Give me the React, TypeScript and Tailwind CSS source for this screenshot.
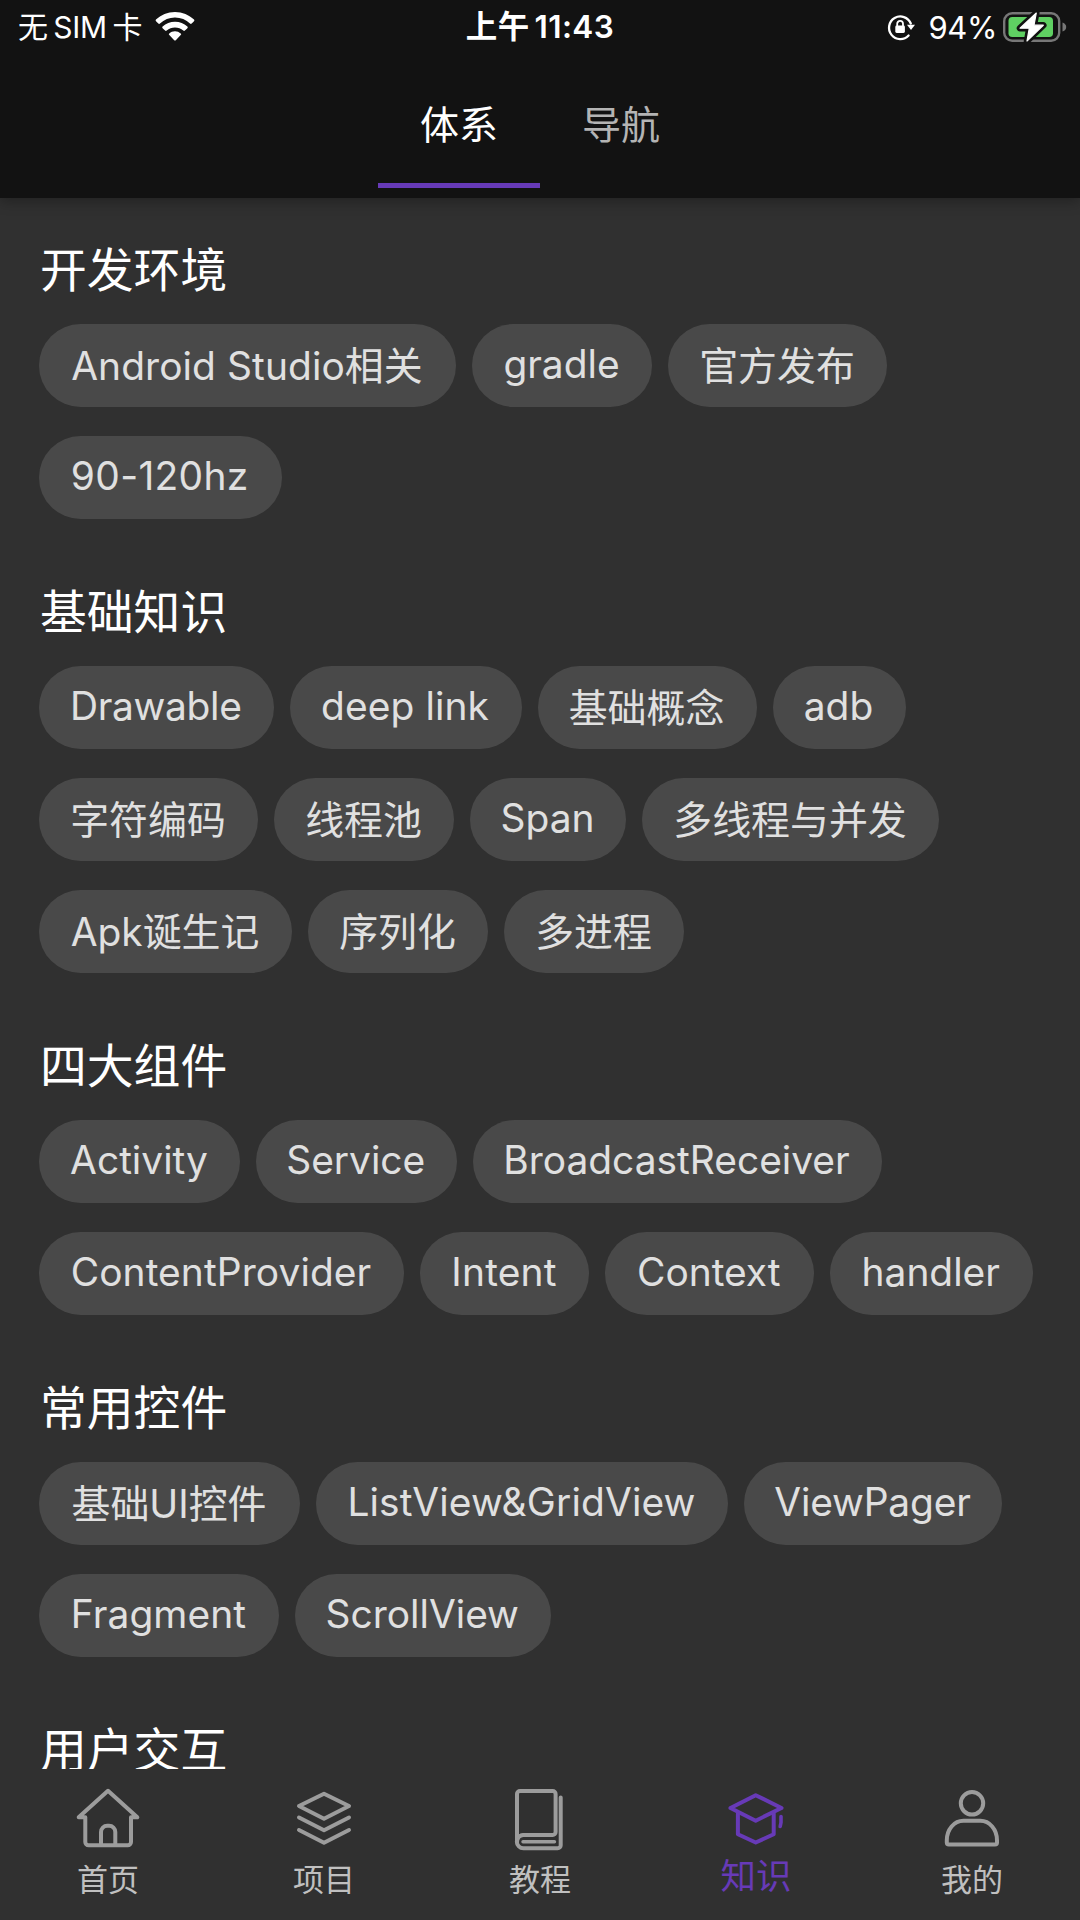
import React from "react";

type Chip = [label: string, classes: string];

const SECTIONS: { title: string; chips: Chip[] }[] = [
  {
    title: "开发环境",
    chips: [
      ["Android Studio相关", "w-[417px] tracking-[0.1px]"],
      ["gradle", "w-[180px]"],
      ["官方发布", "w-[219px]"],
      ["90-120hz", "w-[242.500px] tracking-[0.35px]"],
    ],
  },
  {
    title: "基础知识",
    chips: [
      ["Drawable", "w-[234.500px] tracking-[-0.3px]"],
      ["deep link", "w-[232px] tracking-[0.1px]"],
      ["基础概念", "w-[219px]"],
      ["adb", "w-[133px]"],
      ["字符编码", "w-[219px]"],
      ["线程池", "w-[180px]"],
      ["Span", "w-[156px]"],
      ["多线程与并发", "w-[297px]"],
      ["Apk诞生记", "w-[253px]"],
      ["序列化", "w-[180px]"],
      ["多进程", "w-[180px]"],
    ],
  },
  {
    title: "四大组件",
    chips: [
      ["Activity", "w-[201px]"],
      ["Service", "w-[200.500px]"],
      ["BroadcastReceiver", "w-[409px]"],
      ["ContentProvider", "w-[365px] tracking-[0.1px]"],
      ["Intent", "w-[169px] tracking-[0.2px]"],
      ["Context", "w-[208.500px]"],
      ["handler", "w-[203.500px]"],
    ],
  },
  {
    title: "常用控件",
    chips: [
      ["基础UI控件", "w-[261px]"],
      ["ListView&GridView", "w-[412px] tracking-[0.15px]"],
      ["ViewPager", "w-[258px] tracking-[-0.15px]"],
      ["Fragment", "w-[240px] tracking-[0.1px]"],
      ["ScrollView", "w-[255.500px]"],
    ],
  },
  { title: "用户交互", chips: [] },
];

const hasHan = (s: string) => /[\u4e00-\u9fff]/.test(s);

function WifiIcon() {
  return (
    <svg className="ml-[13px] h-[30px] w-10" viewBox="0 0 40 30" fill="#fff">
      <path d="M20 0C12.600 0 5.900 2.900 1 7.600a1.200 1.200 0 0 0 0 1.700l2.300 2.300a1.200 1.200 0 0 0 1.700 0A21.600 21.600 0 0 1 20 5.600c5.800 0 11.100 2.200 15 6a1.200 1.200 0 0 0 1.700 0L39 9.300a1.200 1.200 0 0 0 0-1.700C34.100 2.900 27.400 0 20 0Z" />
      <path d="M20 9.700c-4.800 0-9.100 1.800-12.400 4.800a1.200 1.200 0 0 0 0 1.700l2.500 2.400a1.200 1.200 0 0 0 1.600 0 12.300 12.300 0 0 1 16.600 0 1.200 1.200 0 0 0 1.600 0l2.500-2.400a1.200 1.200 0 0 0 0-1.700A18.200 18.200 0 0 0 20 9.700Z" />
      <path d="M20 19.300c-2.200 0-4.200.8-5.700 2.100a1.100 1.100 0 0 0 0 1.700l4.900 5.100a1.100 1.100 0 0 0 1.600 0l4.900-5.100a1.100 1.100 0 0 0 0-1.700A8.700 8.700 0 0 0 20 19.300Z" />
    </svg>
  );
}

function RotationLockIcon() {
  return (
    <svg className="h-7 w-7" viewBox="0 0 28 28" fill="none">
      <path d="M21.600 22.500A11.300 11.300 0 1 1 23.800 10.500" stroke="#fff" strokeWidth="2.300" strokeLinecap="round" />
      <path d="M20 11.700h8L24 17Z" fill="#fff" />
      <rect x="8.300" y="12.600" width="9.600" height="7.400" rx="1.400" fill="#fff" />
      <path d="M10.200 13v-2.200a2.900 2.900 0 0 1 5.800 0V13" stroke="#fff" strokeWidth="1.800" />
    </svg>
  );
}

function BatteryIcon() {
  return (
    <svg className="ml-1.5 h-8 w-[64px]" viewBox="0 0 64 32" fill="none">
      <rect x="1.200" y="2.200" width="55" height="27.600" rx="8" stroke="#777" strokeWidth="2.400" />
      <path d="M59.500 11.500c2.600 1 3.700 2.500 3.700 4.500s-1.100 3.500-3.700 4.500Z" fill="#777" />
      <rect x="5.500" y="6" width="44.500" height="20" rx="3.800" fill="#5fd062" />
      <path
        d="M33.300 2 17 17.200h9.300L24 30 40.300 14.200H31Z"
        fill="#121212"
        stroke="#121212"
        strokeWidth="6.500"
        strokeLinejoin="round"
      />
      <path d="M33.300 2 17 17.200h9.300L24 30 40.300 14.200H31Z" fill="#fff" stroke="#fff" strokeWidth="1.200" strokeLinejoin="round" />
    </svg>
  );
}

function NavIcon({ children }: { children: React.ReactNode }) {
  return (
    <svg
      className="h-[72px] w-[72px]"
      viewBox="0 0 72 72"
      fill="none"
      stroke="currentColor"
      strokeWidth="4"
      strokeLinecap="round"
      strokeLinejoin="round"
    >
      {children}
    </svg>
  );
}

const NAV: { label: string; active?: boolean; icon: React.ReactNode }[] = [
  {
    label: "首页",
    icon: (
      <>
        <path d="M13.300 37.300H6.700L36 10.800l29.300 26.500H59V62a3.300 3.300 0 0 1-3.300 3.300H16.600a3.300 3.300 0 0 1-3.300-3.300Z" />
        <path d="M29 65V52a6.200 6.200 0 0 1 6.200-6.200h1.900a6.200 6.200 0 0 1 6.200 6.200v13" />
      </>
    ),
  },
  {
    label: "项目",
    icon: (
      <>
        <path d="M36 13.700 61 26 36 38.700 11 26Z" />
        <path d="m11 37.500 25 12.700 25-12.700" />
        <path d="m11 50 25 12.700L61 50" />
      </>
    ),
  },
  {
    label: "教程",
    icon: (
      <>
        <path d="M13 62V14a3 3 0 0 1 3-3h32.600a3 3 0 0 1 3 3v38a3 3 0 0 1-3 3H19.500a6.600 6.600 0 0 0 0 13.300h34.200a3 3 0 0 0 3-3V17.500" />
        <path d="M13 62c0-4 2.500-7 6.500-7" />
        <path d="M19 61.700h31.500" strokeWidth="3.400" />
      </>
    ),
  },
  {
    label: "知识",
    active: true,
    icon: (
      <>
        <path d="M35.700 15.200 61.500 28 35.700 40.700 10.500 28Z" />
        <path d="M17.900 33.500v20.800l17.800 8.200 18-8.200V33.500" />
        <path d="M61 36.500v6l-.8 4" strokeWidth="3.600" />
      </>
    ),
  },
  {
    label: "我的",
    icon: (
      <>
        <circle cx="36" cy="23.300" r="11.200" />
        <path d="M27.500 40.800h16.800c9.400 0 16.700 8.700 16.700 19.500v2.200a2 2 0 0 1-2 2H12.800a2 2 0 0 1-2-2v-2.200c0-10.800 7.300-19.500 16.700-19.500Z" />
      </>
    ),
  },
];

export default function App() {
  return (
    <div className="flex h-[1920px] w-[1080px] flex-col overflow-hidden bg-[#303030] font-['Inter','Noto_Sans_CJK_SC',sans-serif] text-white">
      <header className="z-10 flex h-[198px] shrink-0 flex-col bg-[#121212] shadow-[0_4px_12px_rgba(0,0,0,0.28)]">
        <div className="grid h-[54px] grid-cols-3 items-center whitespace-nowrap text-[30px] leading-none">
          <div className="flex items-center pl-[18px]">
            <span className="tracking-[-0.3px] [word-spacing:-2.500px]">无 SIM 卡</span>
            <WifiIcon />
          </div>
          <div className="text-center text-[31.500px] font-semibold tracking-[0.4px] [word-spacing:-3.500px]">上午 11:43</div>
          <div className="flex items-center justify-end pr-[13px]">
            <RotationLockIcon />
            <span className="ml-3.5 text-[31px] tracking-[-0.4px]">94%</span>
            <BatteryIcon />
          </div>
        </div>
        <div className="flex h-[134px] justify-center text-[39px] leading-none">
          <div className="flex w-[162px] items-center justify-center border-b-[5px] border-[#673ab7] pt-3">体系</div>
          <div className="flex w-[162px] items-center justify-center border-b-[5px] border-transparent pt-3 text-[#b4b4b4]">导航</div>
        </div>
      </header>

      <main className="min-h-0 flex-1 overflow-hidden pl-[39px] pr-[39px] pt-[37px]">
        {SECTIONS.map((s) => (
          <section key={s.title} className="mb-[58px]">
            <h2 className="flex h-[88.900px] items-start pl-px pt-[11px] text-[46.800px] leading-[48px]">{s.title}</h2>
            <div className="flex flex-wrap gap-x-4 gap-y-[29px]">
              {s.chips.map(([label, classes]) => (
                <span
                  key={label}
                  className={`flex h-[83px] items-center justify-center whitespace-nowrap rounded-full bg-[#494949] pr-px text-[38.900px] leading-none text-[#e0e0e0] ${classes} ${hasHan(label) ? "pt-[3px]" : "pb-px"}`}
                >
                  {label}
                </span>
              ))}
            </div>
          </section>
        ))}
      </main>

      <nav className="grid h-[151px] shrink-0 grid-cols-5 pt-[11px]">
        {NAV.map((n) => (
          <div key={n.label} className={`flex flex-col items-center ${n.active ? "text-[#673ab7]" : "text-[#9c9c9c]"}`}>
            <NavIcon>{n.icon}</NavIcon>
            <span
              className={
                n.active
                  ? "mt-[7px] text-[35.500px] leading-9"
                  : "mt-3 text-[31px] leading-8 text-[#c0c0c0]"
              }
            >
              {n.label}
            </span>
          </div>
        ))}
      </nav>
    </div>
  );
}
